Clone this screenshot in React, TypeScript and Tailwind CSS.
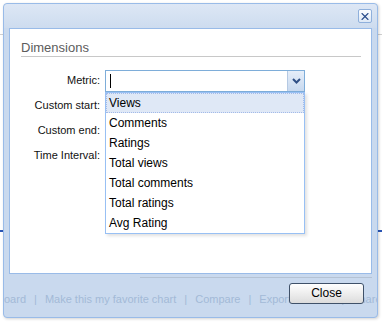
import { X } from 'lucide-react';

const metrics = ['Views', 'Comments', 'Ratings', 'Total views', 'Total comments', 'Total ratings', 'Avg Rating'];
const labels = ['Custom start:', 'Custom end:', 'Time Interval:'];
// links of the page behind, seen through the window frame
const pageLinks = ['oard', 'Make this my favorite chart', 'Compare', 'Export to Excel', 'Share'];

export default function App() {
  return (
    <div className="relative w-[382px] h-[322px] overflow-hidden bg-white font-['Liberation_Sans',Arial,sans-serif] text-black">
      {/* Page behind the dialog */}
      <div className="h-[35px] border-b border-[#cfcfcf]" />
      <div className="mt-[195px] h-[2px] bg-[#2a55b5]" />

      {/* Dialog window */}
      <div className="absolute left-[3px] top-[3px] w-[375px] h-[315px] flex flex-col rounded-[4px] border border-[#99bbe8] bg-[#c9d9ee] shadow-[1px_1px_3px_rgba(0,0,0,0.18)]">
        {/* Header with close tool */}
        <div className="h-[24px] flex justify-end pt-[5px] pr-[5px] rounded-t-[4px] bg-gradient-to-b from-[#dde7f5] to-[#cddcef]">
          <button className="w-[14px] h-[14px] flex items-center justify-center rounded-[2px] border border-[#8fb0dc] bg-gradient-to-b from-[#fbfdff] to-[#dde8f6]">
            <X size={13} strokeWidth={2.25} className="text-[#2b4d8c]" />
          </button>
        </div>

        {/* Body */}
        <div className="mx-[5px] h-[246px] border border-[#99bbe8] bg-white">
          <div className="mt-[11px] ml-[11px] mr-[10px] h-[17px] border-b border-[#c8c8c8] text-[13px] leading-[16px] text-[#5c5c5c]">
            Dimensions
          </div>

          <div className="mt-[13px] flex flex-col gap-[3px] text-[11px] text-[#111]">
            {/* Metric combo with its open list */}
            <div className="relative flex h-[22px]">
              <label className="w-[90px] text-right pt-[3px] leading-[14px]">Metric:</label>
              <div className="ml-[5px] w-[200px] h-[22px] flex border border-[#7eadd9] bg-white">
                <div className="flex-1 flex items-center pl-[4px]">
                  <div className="w-px h-[14px] bg-black" />
                </div>
                <div className="w-[17px] flex items-center justify-center border-l border-[#b5c9e3] bg-gradient-to-b from-[#e6eef9] to-[#c8d9ef]">
                  <svg width="9" height="6" viewBox="0 0 9 6">
                    <polyline points="1,1 4.5,4.5 8,1" fill="none" stroke="#2f4f86" strokeWidth="2" />
                  </svg>
                </div>
              </div>

              <ul className="absolute left-[95px] top-[22px] z-10 w-[200px] border border-[#98c0f4] bg-white text-[12px] text-black shadow-[2px_2px_3px_rgba(0,0,0,0.12)]">
                {metrics.map((m, i) => (
                  <li
                    key={m}
                    className={[
                      'h-[20px] leading-[18px] pl-[2px] border border-dotted whitespace-nowrap',
                      i === 0 ? 'bg-[#dfe8f6] border-[#a3bae9]' : 'border-transparent',
                    ].join(' ')}
                  >
                    {m}
                  </li>
                ))}
              </ul>
            </div>

            {labels.map(l => (
              <div key={l} className="flex h-[22px]">
                <label className="w-[90px] text-right pt-[3px] leading-[14px]">{l}</label>
              </div>
            ))}
          </div>
        </div>

        {/* Footer */}
        <div className="relative flex-1 overflow-hidden">
          <div className="mt-[3px] ml-[136px] w-[232px] border-t border-[#b4c2d4]" />
          <div className="mt-[14px] flex gap-[8px] whitespace-nowrap text-[11px] leading-[14px] text-[#a3b9d7]">
            {pageLinks.map((p, i) => (
              <span key={p} className="flex gap-[8px]">
                {i > 0 && <span>|</span>}
                <span>{p}</span>
              </span>
            ))}
          </div>
          <button className="absolute right-[13px] top-[9px] w-[75px] h-[21px] rounded-[3px] border border-[#3f5169] bg-gradient-to-b from-[#ffffff] to-[#dcdcdc] text-[12px] leading-[19px] text-black">
            Close
          </button>
        </div>
      </div>
    </div>
  );
}
